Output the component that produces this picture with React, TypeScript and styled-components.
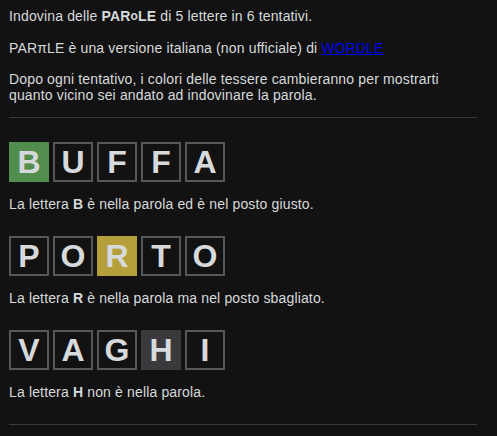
import React from "react";
import styled, { createGlobalStyle } from "styled-components";

const Global = createGlobalStyle`
  html, body { margin: 0; padding: 0; background: #121212; }
  body { font-family: "Liberation Sans", Arial, sans-serif; color: #d7dadc; }
`;

const Page = styled.div`
  width: 468px;
  padding: 8px 0 0 9px;
  font-size: 14px;
  line-height: 16px;
  letter-spacing: 0.15px;
`;

const Intro = styled.p`
  margin: 0 0 15px;
  &:first-child { margin-bottom: 16px; }
  &:last-of-type { margin-bottom: 0; }
`;

const SmallO = styled.span`
  font-size: 12px;
  line-height: 0;
  position: relative;
  top: -1px;
`;

const Divider = styled.hr`
  border: none;
  height: 1px;
  background: #3a3a3c;
  margin: ${(p: { $top: number }) => p.$top}px 0 0;
`;

const Link = styled.a`
  color: #0000ee;
  text-decoration: underline;
`;

const Example = styled.div`
  margin-top: 24px;
  display: flex;
  flex-direction: column;
  gap: 14px;
`;

const Row = styled.div`
  display: flex;
  gap: 4px;
  letter-spacing: 0;
`;

type State = "correct" | "present" | "absent" | "none";
const bg: Record<State, string> = {
  correct: "#538d4e",
  present: "#b59f3b",
  absent: "#3a3a3c",
  none: "transparent",
};

const Tile = styled.div<{ $state: State }>`
  box-sizing: border-box;
  width: 40px;
  height: 40px;
  display: flex;
  align-items: center;
  justify-content: center;
  font-size: 32px;
  font-weight: bold;
  color: #d7dadc;
  background: ${(p) => bg[p.$state]};
  border: 2px solid ${(p) => (p.$state === "none" ? "#565758" : bg[p.$state])};
`;

const Caption = styled.p`
  margin: 0;
`;

const examples: { word: string; idx: number; state: State; text: React.ReactNode }[] = [
  { word: "BUFFA", idx: 0, state: "correct", text: <>La lettera <b>B</b> è nella parola ed è nel posto giusto.</> },
  { word: "PORTO", idx: 2, state: "present", text: <>La lettera <b>R</b> è nella parola ma nel posto sbagliato.</> },
  { word: "VAGHI", idx: 3, state: "absent", text: <>La lettera <b>H</b> non è nella parola.</> },
];

export default function App() {
  return (
    <>
      <Global />
      <Page>
        <Intro>Indovina delle <b>PAR<SmallO>o</SmallO>LE</b> di 5 lettere in 6 tentativi.</Intro>
        <Intro>PARπLE è una versione italiana (non ufficiale) di <Link href="#">WORDLE</Link></Intro>
        <Intro>Dopo ogni tentativo, i colori delle tessere cambieranno per mostrarti quanto vicino sei andato ad indovinare la parola.</Intro>
        <Divider $top={14} />
        {examples.map((ex) => (
          <Example key={ex.word}>
            <Row>
              {ex.word.split("").map((l, i) => (
                <Tile key={i} $state={i === ex.idx ? ex.state : "none"}>{l}</Tile>
              ))}
            </Row>
            <Caption>{ex.text}</Caption>
          </Example>
        ))}
        <Divider $top={24} />
      </Page>
    </>
  );
}
